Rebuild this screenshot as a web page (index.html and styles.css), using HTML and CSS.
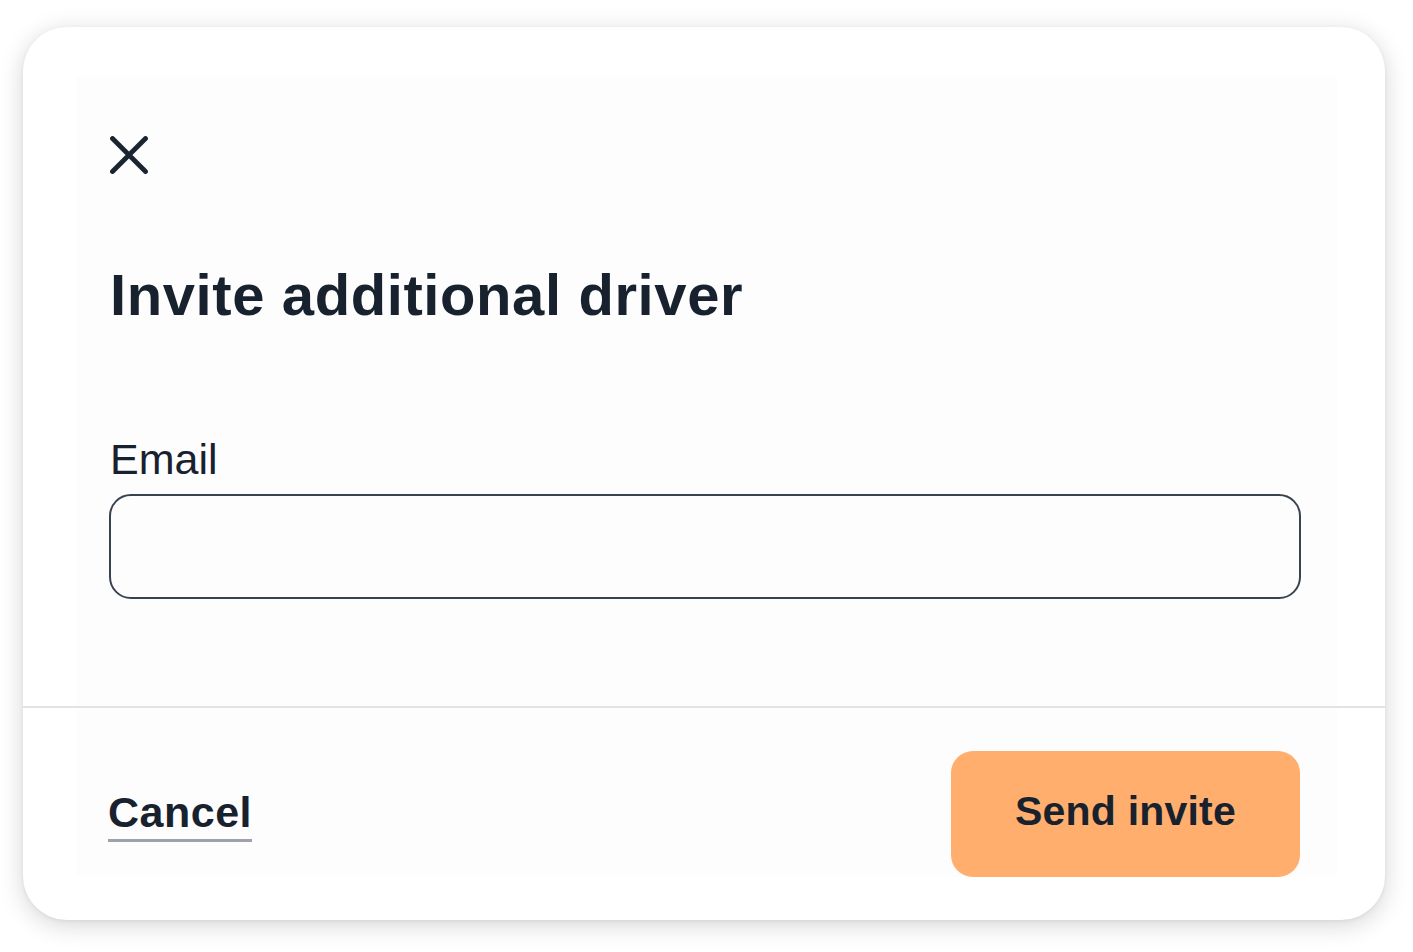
FILE: index.html
```html
<!DOCTYPE html>
<html lang="en">
<head>
<meta charset="utf-8">
<title>Invite additional driver</title>
<link rel="stylesheet" href="styles.css">
</head>
<body>
<div class="page">
  <div class="card" role="dialog" aria-labelledby="dlg-title">
    <div class="card-body">
      <button class="close" aria-label="Close">
        <svg viewBox="0 0 38 38" width="38" height="38" aria-hidden="true">
          <path d="M2.5 2.5 L35.5 35.5 M35.5 2.5 L2.5 35.5" fill="none" stroke="currentColor" stroke-width="4.8" stroke-linecap="round"/>
        </svg>
      </button>
      <h1 class="title" id="dlg-title">Invite additional driver</h1>
      <label class="label" for="email">Email</label>
      <input class="input" id="email" type="email">
    </div>
    <div class="divider"></div>
    <div class="card-footer">
      <a class="cancel" href="#">Cancel</a>
      <button class="send">Send invite</button>
    </div>
  </div>
</div>
</body>
</html>
```

FILE: styles.css
```css
* { box-sizing: border-box; }
html, body { margin: 0; padding: 0; background: #ffffff; }
body {
  font-family: "Liberation Sans", Arial, sans-serif;
  color: #18222e;
}
.page {
  padding: 27px 28px 32px 23px;
}
.card {
  position: relative;
  width: 1362px;
  height: 893px;
  background: #ffffff;
  border-radius: 44px;
  box-shadow: 0 5px 24px rgba(0, 0, 0, 0.17), 0 1px 4px rgba(0, 0, 0, 0.06);
  display: flex;
  flex-direction: column;
}
.card::before {
  content: "";
  position: absolute;
  top: 50px;
  left: 54px;
  right: 48px;
  bottom: 43px;
  background: #fdfdfd;
  z-index: 0;
}
.card-body, .divider, .card-footer { position: relative; z-index: 1; }
.card-body {
  padding: 109px 84px 107px 86px;
  display: flex;
  flex-direction: column;
  align-items: flex-start;
}
.close {
  width: 38px;
  height: 38px;
  margin-left: 1px;
  padding: 0;
  border: 0;
  background: none;
  color: #1b2531;
  display: block;
  cursor: pointer;
}
.close svg { display: block; }
.title {
  margin: 86px 0 0 1px;
  font-size: 58px;
  line-height: 70px;
  font-weight: 700;
  letter-spacing: 0.6px;
  color: #18222e;
}
.label {
  margin: 104px 0 0 1px;
  font-size: 43px;
  line-height: 50px;
  font-weight: 400;
  color: #18222e;
}
.input {
  margin-top: 10px;
  width: 100%;
  height: 105px;
  border: 2.7px solid #39434f;
  border-radius: 22px;
  background: transparent;
  font: inherit;
}
.divider {
  height: 2px;
  background: #e3e3e3;
}
.card-footer {
  flex: 1;
  display: flex;
  align-items: center;
  justify-content: space-between;
  padding: 0 85px 0 85px;
}
.cancel {
  margin-top: -5px;
  font-size: 43px;
  line-height: 50px;
  font-weight: 700;
  letter-spacing: 0.5px;
  color: #18222e;
  text-decoration: underline;
  text-decoration-color: #9ea3aa;
  text-decoration-thickness: 3px;
  text-underline-offset: 12px;
}
.send {
  width: 349px;
  height: 126px;
  padding: 0 0 6px 0;
  border: 0;
  border-radius: 22px;
  background: #ffae6d;
  color: #18222e;
  font-family: "Liberation Sans", Arial, sans-serif;
  font-size: 41px;
  font-weight: 700;
  letter-spacing: 0.2px;
  cursor: pointer;
}
```
